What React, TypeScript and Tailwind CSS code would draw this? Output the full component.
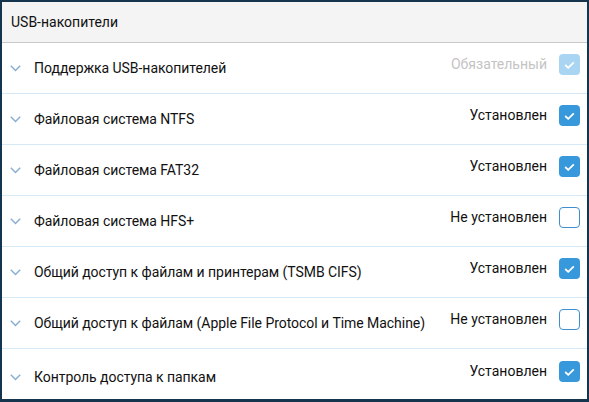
import React from "react";

type State = "required" | "on" | "off";

const rows: { label: string; status: string; state: State }[] = [
  { label: "Поддержка USB-накопителей", status: "Обязательный", state: "required" },
  { label: "Файловая система NTFS", status: "Установлен", state: "on" },
  { label: "Файловая система FAT32", status: "Установлен", state: "on" },
  { label: "Файловая система HFS+", status: "Не установлен", state: "off" },
  { label: "Общий доступ к файлам и принтерам (TSMB CIFS)", status: "Установлен", state: "on" },
  { label: "Общий доступ к файлам (Apple File Protocol и Time Machine)", status: "Не установлен", state: "off" },
  { label: "Контроль доступа к папкам", status: "Установлен", state: "on" },
];

function Chevron() {
  return (
    <svg width="11" height="7" viewBox="0 0 11 7" className="shrink-0">
      <path d="M0.8 0.8 L5.5 5.6 L10.2 0.8" fill="none" stroke="#86aed3" strokeWidth="1.4" />
    </svg>
  );
}

function Check({ state }: { state: State }) {
  if (state === "off") {
    return <div className="w-[21px] h-[21px] rounded-[4px] border border-[#3f8fd0] bg-white shrink-0" />;
  }
  const bg = state === "required" ? "bg-[#aad5f2]" : "bg-[#3898dc]";
  return (
    <div className={`w-[21px] h-[21px] rounded-[4px] ${bg} flex items-center justify-center shrink-0`}>
      <svg width="11" height="8" viewBox="0 0 11 8">
        <path d="M1.2 4 L4.2 6.8 L9.8 1.3" fill="none" stroke="#ffffff" strokeWidth="1.8" />
      </svg>
    </div>
  );
}

export default function App() {
  return (
    <div
      className="w-[589px] h-[402px] bg-[#15344e] pt-[2px] pl-[2px] pr-[2px] pb-[3px] text-[14px] text-[#111]"
      style={{ fontFamily: "Roboto, 'Liberation Sans', sans-serif" }}
    >
      <div className="w-full h-full bg-white flex flex-col overflow-hidden">
        <div className="h-[41px] shrink-0 bg-[#f4f4f4] border-b border-[#c9c9c9] flex items-center pl-[9px]">
          USB-накопители
        </div>
        {rows.map((r, i) => {
          const last = i === rows.length - 1;
          return (
            <div
              key={i}
              className={`shrink-0 flex items-center pl-[8px] pr-[7px] ${last ? "h-[56px]" : "h-[51px] border-b border-[#d6e9f6]"}`}
            >
              <Chevron />
              <span className="ml-[13px] flex-1 tracking-[-0.05px]">{r.label}</span>
              <div className={`self-start flex items-center gap-[12px] ${last ? "mt-[12px]" : "mt-[11px]"}`}>
                <span className={r.state === "required" ? "text-[#c4c4c4]" : ""}>{r.status}</span>
                <Check state={r.state} />
              </div>
            </div>
          );
        })}
      </div>
    </div>
  );
}
